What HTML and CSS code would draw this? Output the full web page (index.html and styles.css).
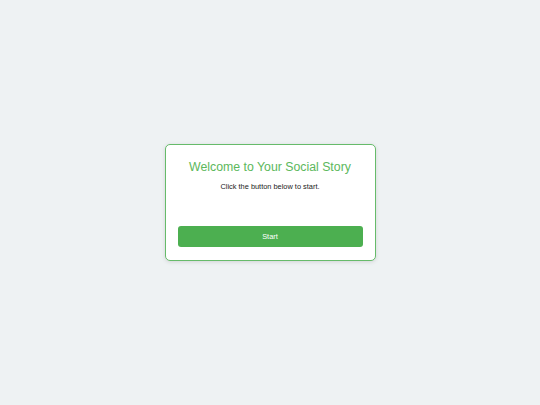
FILE: index.html
```html
<!DOCTYPE html>
<html>
<head>
<meta charset="utf-8">
<link rel="stylesheet" href="styles.css">
</head>
<body>
<div class="page">
  <div class="card">
    <h1 class="title">Welcome to Your Social Story</h1>
    <p class="subtitle">Click the button below to start.</p>
    <button class="start">Start</button>
  </div>
</div>
</body>
</html>
```
FILE: styles.css
```css
html, body {
  margin: 0;
  padding: 0;
  height: 100%;
}
body {
  background: #eef2f3;
  font-family: "Liberation Sans", Arial, sans-serif;
}
.page {
  height: 100%;
  display: flex;
  align-items: center;
  justify-content: center;
}
.card {
  box-sizing: border-box;
  width: 211px;
  background: #ffffff;
  border: 1.5px solid #66bb6a;
  border-radius: 5px;
  box-shadow: 0 1px 4px rgba(0, 0, 0, 0.12);
  padding: 12px 12px 13px;
  display: flex;
  flex-direction: column;
  align-items: stretch;
  text-align: center;
}
.title {
  margin: 1.5px 0 0;
  font-size: 12.3px;
  font-weight: normal;
  line-height: 17px;
  color: #5cb85c;
}
.subtitle {
  margin: 6.5px 0 0;
  font-size: 7.4px;
  line-height: 10px;
  color: #222;
}
.start {
  margin-top: 33.5px;
  height: 21px;
  border: none;
  border-radius: 3px;
  background: #4caf50;
  color: #ffffff;
  font-family: "Liberation Sans", Arial, sans-serif;
  font-size: 7.4px;
  padding: 0;
}
```
